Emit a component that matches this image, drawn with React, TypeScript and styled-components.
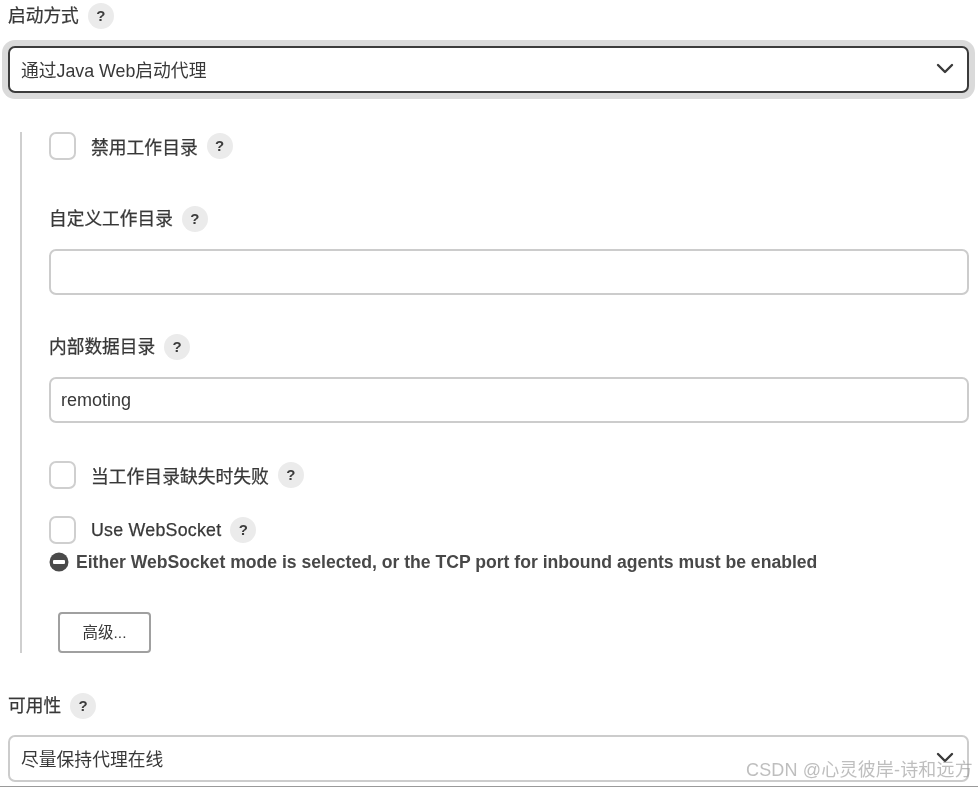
import React from "react";
import styled, { createGlobalStyle } from "styled-components";

const Global = createGlobalStyle`
  html, body { margin: 0; padding: 0; background: #fff; }
  body { font-family: "Liberation Sans", "Noto Sans CJK SC", sans-serif; color: #383838; }
`;

const Page = styled.div`
  position: relative;
  width: 978px;
  height: 787px;
  overflow: hidden;
  box-sizing: border-box;
  padding: 3px 9px 0 8px;
  background: #fff;
  filter: blur(0.45px);
`;

const LabelRow = styled.div<{ $top?: number; $left?: number }>`
  display: flex;
  align-items: center;
  height: 26px;
  gap: 9px;
  margin-top: ${(p) => p.$top ?? 0}px;
  margin-left: ${(p) => p.$left ?? 0}px;
  font-size: 17.7px;
  font-weight: 400;
  -webkit-text-stroke: 0.25px #383838;
  line-height: 26px;
`;

const Help = styled.span`
  flex: none;
  width: 26px;
  height: 26px;
  border-radius: 50%;
  background: #ebebeb;
  color: #3c3c3c;
  font-size: 15px;
  font-weight: 700;
  text-align: center;
  line-height: 25px;
  -webkit-text-stroke: 0;
`;

const SelectBox = styled.div<{ $focused?: boolean; $top: number }>`
  display: flex;
  align-items: center;
  justify-content: space-between;
  box-sizing: border-box;
  height: 47px;
  margin-top: ${(p) => p.$top}px;
  padding: 0 13px 2px 11px;
  border: 2px solid ${(p) => (p.$focused ? "#3b3b3b" : "#cccccc")};
  border-radius: 7px;
  box-shadow: ${(p) => (p.$focused ? "0 0 0 6px #dadada" : "none")};
  background: #fff;
  font-size: 17.8px;
`;

const Chevron = styled.svg`
  flex: none;
  width: 18px;
  height: 11px;
  fill: none;
  stroke: #3a3a3a;
  stroke-width: 2.4;
  stroke-linecap: round;
  stroke-linejoin: round;
`;

const Nested = styled.div`
  box-sizing: border-box;
  height: 521px;
  margin: 39px 0 0 12px;
  padding: 0 0 0 27px;
  border-left: 2px solid #cfcfcf;
`;

const CheckRow = styled.div<{ $top: number }>`
  display: flex;
  align-items: center;
  height: 28px;
  margin-top: ${(p) => p.$top}px;
  font-size: 17.8px;
  font-weight: 400;
`;

const CheckText = styled.span<{ $latin?: boolean }>`
  letter-spacing: ${(p) => (p.$latin ? "0.25px" : "0")};
  -webkit-text-stroke: 0.25px #383838;
`;

const Box = styled.span`
  flex: none;
  box-sizing: border-box;
  width: 27px;
  height: 28px;
  margin-right: 15px;
  border: 2px solid #cfcfcf;
  border-radius: 7px;
  background: #fff;
`;

const RowHelp = styled(Help)`
  margin-left: 9px;
`;

const TextInput = styled.div<{ $top: number }>`
  box-sizing: border-box;
  height: 46px;
  margin-top: ${(p) => p.$top}px;
  padding: 0 10px;
  border: 2px solid #cccccc;
  border-radius: 7px;
  font-size: 18px;
  line-height: 43px;
`;

const ErrorRow = styled.div`
  display: flex;
  align-items: center;
  gap: 7px;
  height: 22px;
  margin-top: 7px;
  font-size: 17.6px;
  font-weight: 700;
  color: #484848;
`;

const ErrorIcon = styled.svg`
  flex: none;
  width: 20px;
  height: 20px;
`;

const Advanced = styled.div`
  box-sizing: border-box;
  width: 93px;
  height: 41px;
  margin: 39px 0 0 9px;
  border: 2px solid #a0a0a0;
  border-radius: 4px;
  font-size: 15.5px;
  line-height: 37px;
  text-align: center;
`;

const BottomRule = styled.div`
  position: absolute;
  left: 0;
  right: 0;
  bottom: 0;
  height: 1px;
  background: #9a9a9a;
`;

const Watermark = styled.div`
  position: absolute;
  left: 746px;
  top: 759px;
  font-size: 18px;
  line-height: 22px;
  letter-spacing: 0.17px;
  white-space: nowrap;
  color: rgba(150, 150, 150, 0.62);
`;

const Arrow = () => (
  <Chevron viewBox="0 0 18 11">
    <path d="M2 2l7 7 7-7" />
  </Chevron>
);

export default function App() {
  return (
    <Page>
      <Global />
      <LabelRow>
        启动方式
        <Help>?</Help>
      </LabelRow>
      <SelectBox $focused $top={17}>
        通过Java Web启动代理
        <Arrow />
      </SelectBox>
      <Nested>
        <CheckRow $top={0}>
          <Box />
          <CheckText>禁用工作目录</CheckText>
          <RowHelp>?</RowHelp>
        </CheckRow>
        <LabelRow $top={46}>
          自定义工作目录
          <Help>?</Help>
        </LabelRow>
        <TextInput $top={17} />
        <LabelRow $top={39}>
          内部数据目录
          <Help>?</Help>
        </LabelRow>
        <TextInput $top={17}>remoting</TextInput>
        <CheckRow $top={38}>
          <Box />
          <CheckText>当工作目录缺失时失败</CheckText>
          <RowHelp>?</RowHelp>
        </CheckRow>
        <CheckRow $top={27}>
          <Box />
          <CheckText $latin>Use WebSocket</CheckText>
          <RowHelp>?</RowHelp>
        </CheckRow>
        <ErrorRow>
          <ErrorIcon viewBox="0 0 20 20">
            <circle cx="10" cy="10" r="9.5" fill="#4a4a4a" />
            <rect x="4" y="8" width="12" height="4" rx="1" fill="#fff" />
          </ErrorIcon>
          Either WebSocket mode is selected, or the TCP port for inbound agents must be enabled
        </ErrorRow>
        <Advanced>高级...</Advanced>
      </Nested>
      <LabelRow $top={40}>
        可用性
        <Help>?</Help>
      </LabelRow>
      <SelectBox $top={16}>
        尽量保持代理在线
        <Arrow />
      </SelectBox>
      <BottomRule />
      <Watermark>CSDN @心灵彼岸-诗和远方</Watermark>
    </Page>
  );
}
